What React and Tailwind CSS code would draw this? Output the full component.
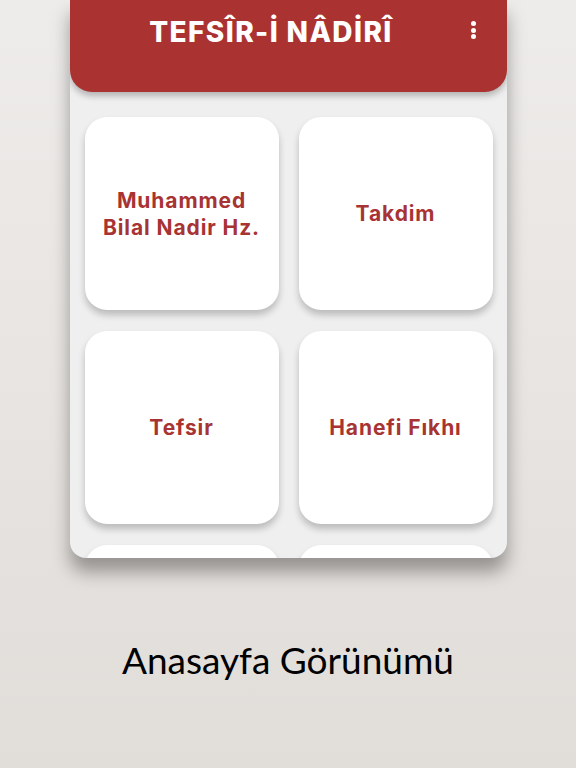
const items = ['Muhammed Bilal Nadir Hz.', 'Takdim', 'Tefsir', 'Hanefi Fıkhı', '', ''];

function Card({ label }) {
  return (
    <div className="flex h-[193px] items-center justify-center rounded-[22px] bg-white px-3 text-center shadow-[0_5px_7px_rgba(0,0,0,0.22)]">
      <span className="text-[21px] font-bold leading-[27px] tracking-[0.9px] text-[#a83333]">{label}</span>
    </div>
  );
}

export default function App() {
  return (
    <div
      className="flex h-[768px] w-[576px] flex-col items-center bg-gradient-to-b from-[#eeecea] to-[#e1ddd9]"
      style={{ fontFamily: 'Inter, "Noto Sans", sans-serif' }}
    >
      {/* phone screen */}
      <div className="flex h-[558px] w-[437px] flex-col overflow-hidden rounded-b-[16px] bg-[#efefef] shadow-[0_14px_18px_rgba(0,0,0,0.35)]">
        <div className="relative z-10 flex h-[92px] shrink-0 items-start justify-center rounded-b-[22px] bg-[#aa3332] pr-[34px] pt-[11px] shadow-[0_4px_6px_rgba(0,0,0,0.25)]">
          <h1 className="text-[28px] font-extrabold tracking-[1.4px] text-white">TEFSÎR-İ NÂDİRÎ</h1>
          <div className="absolute right-[31px] top-[21px] flex flex-col gap-[1.5px]">
            <span className="h-[5px] w-[5px] rounded-full bg-white" />
            <span className="h-[5px] w-[5px] rounded-full bg-white" />
            <span className="h-[5px] w-[5px] rounded-full bg-white" />
          </div>
        </div>
        <div className="grid grid-cols-2 gap-x-[20px] gap-y-[21px] pl-[15px] pr-[14px] pt-[25px]">
          {items.map((t, i) => (
            <Card key={i} label={t} />
          ))}
        </div>
      </div>
      <p
        className="mt-[74px] text-[37px] text-black"
        style={{ fontFamily: 'Lato, "Noto Sans", sans-serif' }}
      >
        Anasayfa Görünümü
      </p>
    </div>
  );
}
